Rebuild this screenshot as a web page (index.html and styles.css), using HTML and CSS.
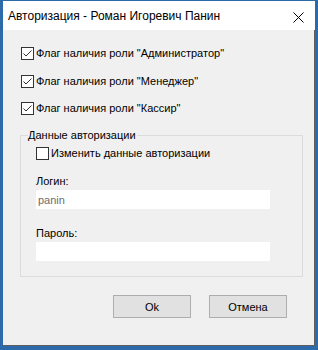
FILE: index.html
```html
<!DOCTYPE html>
<html lang="ru">
<head>
<meta charset="utf-8">
<link rel="stylesheet" href="styles.css">
</head>
<body>
<div class="window">
  <div class="titlebar">
    <span class="title">Авторизация - Роман Игоревич Панин</span>
    <svg class="close" width="11" height="11" viewBox="0 0 11 11"><path d="M0.5 0.5 L10.5 10.5 M10.5 0.5 L0.5 10.5" stroke="#000" stroke-width="1" fill="none"/></svg>
  </div>
  <div class="content">
    <div class="flags">
      <label class="check-row">
        <span class="box"><svg width="11" height="11" viewBox="0 0 11 11"><polyline points="1.5,5.5 4,8 9.5,2.5" fill="none" stroke="#333" stroke-width="1"/></svg></span>
        <span>Флаг наличия роли "Администратор"</span>
      </label>
      <label class="check-row">
        <span class="box"><svg width="11" height="11" viewBox="0 0 11 11"><polyline points="1.5,5.5 4,8 9.5,2.5" fill="none" stroke="#333" stroke-width="1"/></svg></span>
        <span>Флаг наличия роли "Менеджер"</span>
      </label>
      <label class="check-row">
        <span class="box"><svg width="11" height="11" viewBox="0 0 11 11"><polyline points="1.5,5.5 4,8 9.5,2.5" fill="none" stroke="#333" stroke-width="1"/></svg></span>
        <span>Флаг наличия роли "Кассир"</span>
      </label>
    </div>
    <div class="group">
      <span class="group-title">Данные авторизации</span>
      <label class="check-row">
        <span class="box"></span>
        <span>Изменить данные авторизации</span>
      </label>
      <div class="field-label first">Логин:</div>
      <div class="textbox"><span class="disabled-text">panin</span></div>
      <div class="field-label">Пароль:</div>
      <div class="textbox"></div>
    </div>
    <div class="buttons">
      <div class="btn">Ok</div>
      <div class="btn">Отмена</div>
    </div>
  </div>
</div>
</body>
</html>
```
FILE: styles.css
```css
html, body {
  margin: 0;
  padding: 0;
}
body {
  width: 318px;
  height: 350px;
  overflow: hidden;
  background: #2c6aa9;
  font-family: "Liberation Sans", Arial, sans-serif;
  color: #000;
}
.window {
  margin: 1px 3px 0 3px;
  height: 345px;
  display: flex;
  flex-direction: column;
}
.titlebar {
  height: 29px;
  flex: 0 0 29px;
  background: #fff;
  display: flex;
  align-items: center;
  padding-left: 5px;
  font-size: 12px;
}
.title {
  flex: 1;
  padding-top: 1px;
}
.close {
  margin-right: 11px;
  margin-top: 3px;
}
.content {
  flex: 1;
  background: #f0f0f0;
  border-right: 1px solid #5f5f5f;
  border-bottom: 1px solid #5f5f5f;
  font-size: 11px;
  display: flex;
  flex-direction: column;
}
.flags {
  display: flex;
  flex-direction: column;
  gap: 14px;
  margin: 17px 0 0 18px;
}
.flags .check-row:first-child {
  margin-bottom: 1px;
}
.check-row {
  display: flex;
  align-items: center;
  height: 13px;
  gap: 2px;
  line-height: 13px;
}
.box {
  width: 11px;
  height: 11px;
  border: 1px solid #333;
  background: #fff;
  display: flex;
  flex: 0 0 auto;
}
.group {
  position: relative;
  margin: 20px 0 0 17px;
  width: 266px;
  border: 1px solid #dcdcdc;
  padding: 11px 0 15px 15px;
  display: flex;
  flex-direction: column;
}
.group-title {
  position: absolute;
  top: -7px;
  left: 7px;
  padding: 0 1px 0 0;
  background: #f0f0f0;
  line-height: 13px;
  color: #000;
}
.field-label {
  line-height: 13px;
  margin-top: 18px;
  margin-bottom: 2px;
  color: #000;
}
.field-label.first {
  margin-top: 15px;
}
.textbox {
  width: 234px;
  height: 19px;
  background: #fff;
  display: flex;
  align-items: center;
  padding-left: 2px;
  box-sizing: border-box;
}
.disabled-text {
  color: #6d6d6d;
}
.buttons {
  display: flex;
  justify-content: flex-end;
  gap: 18px;
  margin: 18px 27px 0 0;
}
.btn {
  width: 76px;
  height: 21px;
  border: 1px solid #adadad;
  background: #e1e1e1;
  display: flex;
  align-items: center;
  justify-content: center;
}
```
